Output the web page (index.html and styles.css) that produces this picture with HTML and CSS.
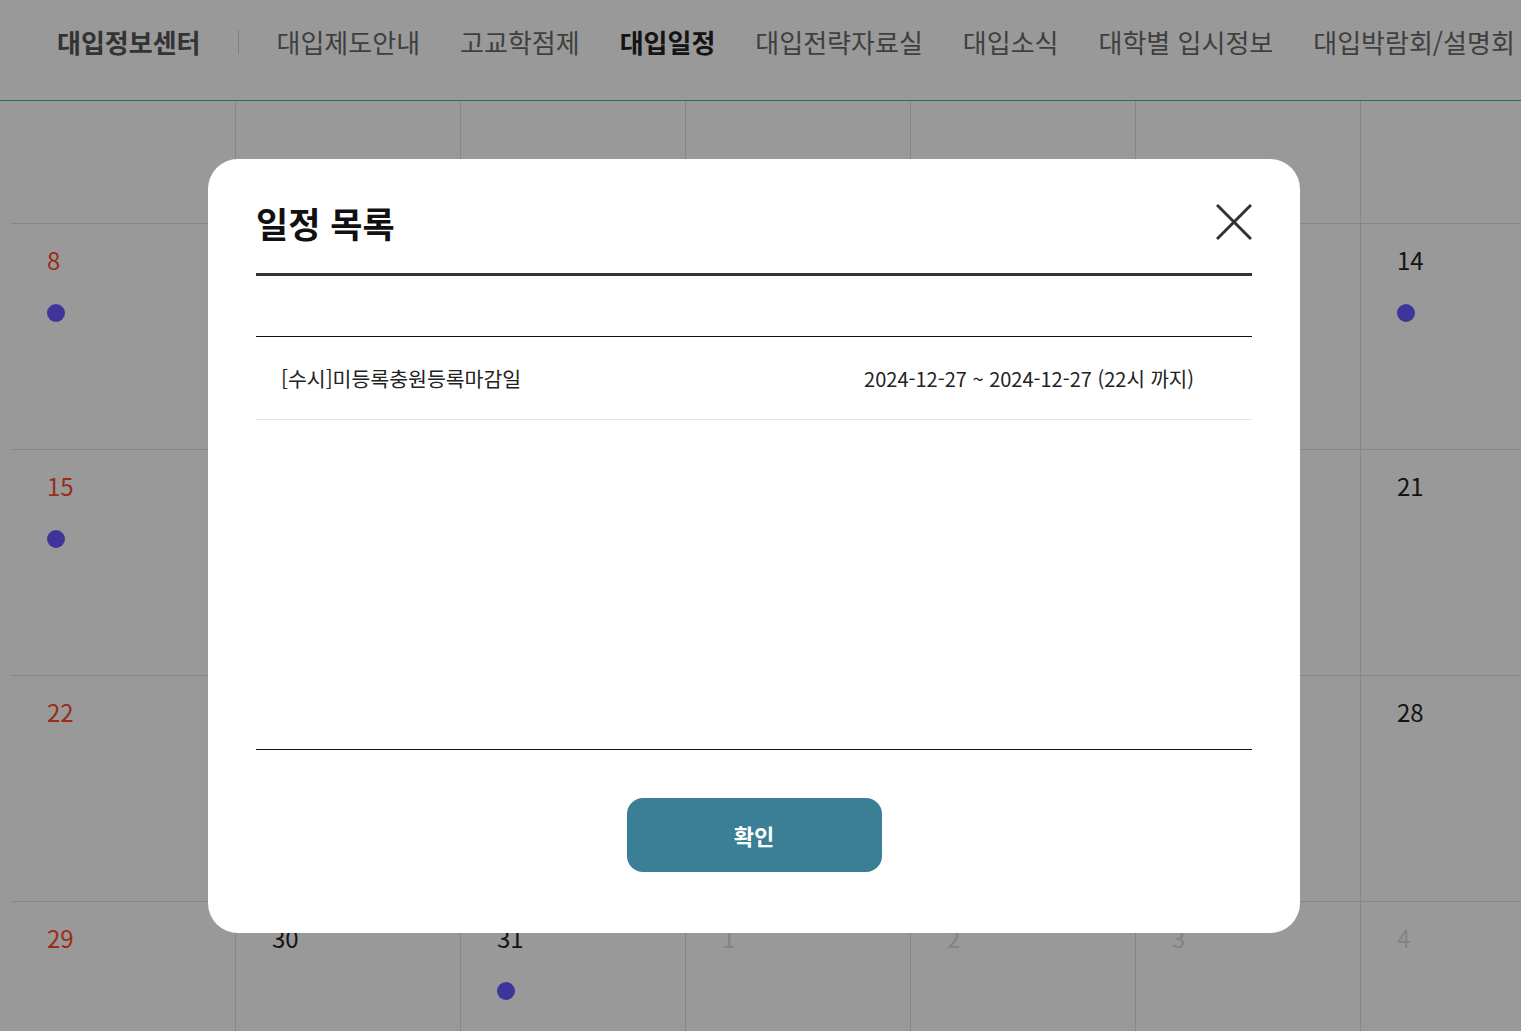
FILE: index.html
```html
<!DOCTYPE html>
<html lang="ko">
<head>
    <meta charset="UTF-8">
    <meta name="viewport" content="width=device-width, initial-scale=1.0">
    <title>대입일정</title>
    <link rel="stylesheet" href="styles.css">
</head>
<body>
    <header class="top-nav">
        <h1 class="brand">대입정보센터</h1>
        <span class="brand-sep"></span>
        <nav class="menu">
            <a href="#">대입제도안내</a>
            <a href="#">고교학점제</a>
            <a href="#" class="active">대입일정</a>
            <a href="#">대입전략자료실</a>
            <a href="#">대입소식</a>
            <a href="#">대학별 입시정보</a>
            <a href="#">대입박람회/설명회</a>
        </nav>
    </header>

    <main class="calendar">
        <div class="week partial">
            <div class="cell"></div><div class="cell"></div><div class="cell"></div><div class="cell"></div><div class="cell"></div><div class="cell"></div><div class="cell"></div>
        </div>
        <div class="week">
            <div class="cell"><span class="day sun">8</span><span class="dot"></span></div>
            <div class="cell"><span class="day">9</span></div>
            <div class="cell"><span class="day">10</span></div>
            <div class="cell"><span class="day">11</span></div>
            <div class="cell"><span class="day">12</span></div>
            <div class="cell"><span class="day">13</span></div>
            <div class="cell"><span class="day">14</span><span class="dot"></span></div>
        </div>
        <div class="week">
            <div class="cell"><span class="day sun">15</span><span class="dot"></span></div>
            <div class="cell"><span class="day">16</span></div>
            <div class="cell"><span class="day">17</span></div>
            <div class="cell"><span class="day">18</span></div>
            <div class="cell"><span class="day">19</span></div>
            <div class="cell"><span class="day">20</span></div>
            <div class="cell"><span class="day">21</span></div>
        </div>
        <div class="week">
            <div class="cell"><span class="day sun">22</span></div>
            <div class="cell"><span class="day">23</span></div>
            <div class="cell"><span class="day">24</span></div>
            <div class="cell"><span class="day">25</span></div>
            <div class="cell"><span class="day">26</span></div>
            <div class="cell"><span class="day">27</span></div>
            <div class="cell"><span class="day">28</span></div>
        </div>
        <div class="week">
            <div class="cell"><span class="day sun">29</span></div>
            <div class="cell"><span class="day">30</span></div>
            <div class="cell"><span class="day">31</span><span class="dot"></span></div>
            <div class="cell"><span class="day other">1</span></div>
            <div class="cell"><span class="day other">2</span></div>
            <div class="cell"><span class="day other">3</span></div>
            <div class="cell"><span class="day other">4</span></div>
        </div>
    </main>

    <div class="dim"></div>

    <div class="modal">
        <div class="modal-head">
            <h2 class="modal-title">일정 목록</h2>
            <button class="modal-close" aria-label="닫기">
                <svg width="36" height="36" viewBox="0 0 36 36">
                    <path d="M1 1 L35 35 M35 1 L1 35" stroke="#333" stroke-width="3" fill="none"/>
                </svg>
            </button>
        </div>
        <div class="schedule-list">
            <div class="schedule-row">
                <span class="schedule-name">[수시]미등록충원등록마감일</span>
                <span class="schedule-date">2024-12-27 ~ 2024-12-27 (22시 까지)</span>
            </div>
        </div>
        <div class="modal-foot">
            <button class="confirm-btn">확인</button>
        </div>
    </div>
</body>
</html>
```

FILE: styles.css
```css
* {
    margin: 0;
    padding: 0;
    box-sizing: border-box;
}

body {
    margin: 0;
    background: #fff;
    font-family: "Noto Sans CJK KR", "Noto Sans", sans-serif;
    color: #222;
    overflow: hidden;
    height: 100vh;
}

/* top navigation */
.top-nav {
    height: 101px;
    border-bottom: 1px solid #45adb5;
    display: flex;
    align-items: flex-start;
    padding: 24px 0 0 57px;
    white-space: nowrap;
}

.brand {
    font-size: 26px;
    line-height: 36px;
    font-weight: 700;
    color: #555;
}

.brand-sep {
    width: 1px;
    height: 24px;
    background: #d6d6d6;
    margin: 6px 38px 0 37px;
}

.menu {
    display: flex;
    gap: 40px;
}

.menu a {
    font-size: 26px;
    line-height: 36px;
    color: #6a6a6a;
    text-decoration: none;
}

.menu a.active {
    font-weight: 700;
    color: #222;
}

/* calendar grid */
.calendar {
    margin-left: 11px;
    width: 1575px;
}

.week {
    display: grid;
    grid-template-columns: repeat(7, 225px);
    height: 226px;
}

.week.partial {
    height: 123px;
}

.cell {
    border-right: 1px solid #e0e0e0;
    border-bottom: 1px solid #e0e0e0;
    padding: 20px 0 0 36px;
    display: flex;
    flex-direction: column;
    align-items: flex-start;
}

.day {
    font-size: 24px;
    line-height: 32px;
    color: #222;
}

.day.sun {
    color: #ff4b2a;
}

.day.other {
    color: #dcdcdc;
}

.dot {
    width: 18px;
    height: 18px;
    border-radius: 50%;
    background: #6a58ff;
    margin-top: 28px;
}

/* modal */
.dim {
    position: fixed;
    inset: 0;
    background: rgba(0, 0, 0, 0.4);
}

.modal {
    position: fixed;
    top: 159px;
    left: 208px;
    width: 1092px;
    height: 774px;
    background: #fff;
    border-radius: 30px;
    padding: 40px 48px 60px;
}

.modal-head {
    display: flex;
    justify-content: space-between;
    align-items: center;
    padding-bottom: 26px;
    border-bottom: 3px solid #333;
    margin-bottom: 60px;
}

.modal-title {
    font-size: 35px;
    line-height: 48px;
    font-weight: 700;
    color: #111;
}

.modal-close {
    background: none;
    border: none;
    width: 36px;
    height: 36px;
    margin: -3px 0 0 0;
    cursor: pointer;
    display: flex;
}

.schedule-list {
    height: 414px;
    border-top: 1px solid #111;
    border-bottom: 1px solid #111;
}

.schedule-row {
    display: flex;
    justify-content: space-between;
    align-items: center;
    height: 83px;
    padding: 0 58px 0 25px;
    border-bottom: 1px solid #e6e6e6;
    font-size: 20px;
    color: #222;
}

.schedule-name {
    font-size: 20.5px;
}

.modal-foot {
    display: flex;
    justify-content: center;
    padding-top: 48px;
}

.confirm-btn {
    width: 255px;
    height: 74px;
    border: none;
    border-radius: 16px;
    background: #3b7f96;
    color: #fff;
    font-family: inherit;
    font-size: 22px;
    font-weight: 700;
    cursor: pointer;
}
```
